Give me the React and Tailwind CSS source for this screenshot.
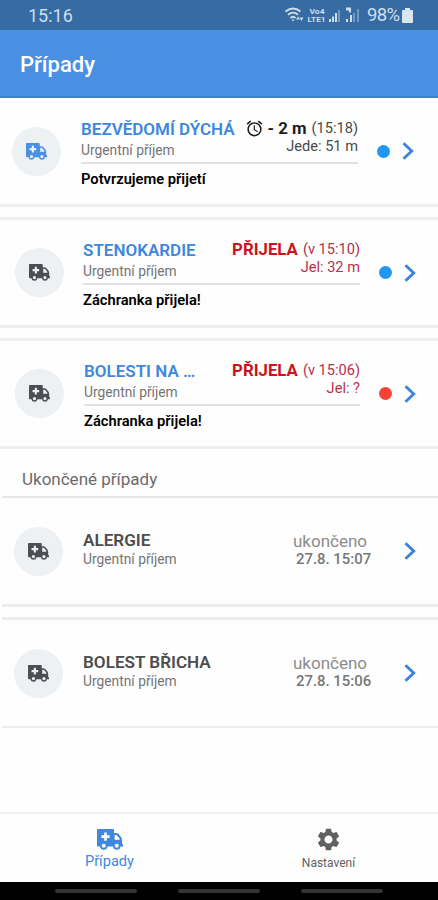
import React from 'react'
import { MdAlarm, MdSettings } from 'react-icons/md'

const activeCases = [
  {
    id: 1,
    title: 'BEZVĚDOMÍ DÝCHÁ',
    place: 'Urgentní příjem',
    message: 'Potvrzujeme přijetí',
    eta: '- 2 m',
    time: '(15:18)',
    drive: 'Jede: 51 m',
    arrived: false,
    dot: 'bg-[#2196f3]',
    card: 'h-[109px] border-b-[3px] pl-3',
    body: 'ml-5 w-[277px]',
  },
  {
    id: 2,
    title: 'STENOKARDIE',
    place: 'Urgentní příjem',
    message: 'Záchranka přijela!',
    time: '(v 15:10)',
    drive: 'Jel: 32 m',
    arrived: true,
    dot: 'bg-[#2196f3]',
    card: 'mt-[10px] h-[111px] border-y-[3px] pl-[15px]',
    body: 'ml-[19px] w-[277px]',
  },
  {
    id: 3,
    title: 'BOLESTI NA …',
    place: 'Urgentní příjem',
    message: 'Záchranka přijela!',
    time: '(v 15:06)',
    drive: 'Jel: ?',
    arrived: true,
    dot: 'bg-[#f44336]',
    card: 'mt-[10px] h-[111px] border-y-[3px] pl-[15px]',
    body: 'ml-5 w-[276px]',
  },
]

const closedCases = [
  { id: 4, title: 'ALERGIE', place: 'Urgentní příjem', date: '27.8. 15:07', card: 'h-[109px] border-b-[3px]' },
  { id: 5, title: 'BOLEST BŘICHA', place: 'Urgentní příjem', date: '27.8. 15:06', card: 'mt-[10px] h-[111px] border-t-[3px] border-b-2' },
]

const Ambulance = ({ className }) => (
  <svg viewBox="0 0 26 21" className={className} fill="currentColor">
    <path
      fillRule="evenodd"
      d="M1 0H16Q17 0 17 1V4H19Q20.5 4 21.6 5.1L24 8Q25 9.3 25 11V15H26V17.5H23.5A3.8 3.8 0 0 1 16 17.5H10.5A3.8 3.8 0 0 1 3 17.5H1Q0 17.5 0 16.5V1Q0 0 1 0ZM7.2 3.5V6.3H4.4V8.9H7.2V11.7H9.8V8.9H12.6V6.3H9.8V3.5ZM17.6 6V10.7H22.8Q22.8 9.8 22.2 9L20.5 6.9Q19.7 6 18.6 6ZM6.75 14.8A2 2 0 1 0 6.75 18.8A2 2 0 1 0 6.75 14.8ZM19.75 14.8A2 2 0 1 0 19.75 18.8A2 2 0 1 0 19.75 14.8Z"
    />
  </svg>
)

const Chevron = () => (
  <svg viewBox="0 0 12 18" className="h-[18px] w-3 shrink-0" fill="none" stroke="#3d85d8" strokeWidth="2.9">
    <path d="M1.5 1.2L9.7 9L1.5 16.8" />
  </svg>
)

const Avatar = ({ color }) => (
  <div className={`flex h-[49px] w-[49px] shrink-0 items-center justify-center rounded-full bg-[#edf1f4] ${color}`}>
    <Ambulance className="h-[17px] w-[21px]" />
  </div>
)

const ActiveCard = ({ item }) => (
  <div className={`flex items-center border-[#efefef] ${item.card}`}>
    <Avatar color={item.arrived ? 'text-[#4b4f54]' : 'text-[#4a90e2]'} />
    <div className={`shrink-0 pt-[5px] ${item.body}`}>
      <div className="flex h-[45px] justify-between border-b-2 border-[#e2e2e2] whitespace-nowrap">
        <div>
          <div className="text-[17px] font-semibold leading-5 text-[#3f87dc]">{item.title}</div>
          <div className="mt-[1px] text-[13.8px] leading-5 text-[#757575]">{item.place}</div>
        </div>
        <div className={`text-right ${item.arrived ? 'text-[#b9304a]' : 'text-[#4a4a4a]'}`}>
          <div className="flex h-5 items-center justify-end text-[14.6px]">
            {item.arrived ? (
              <span className="mr-[5px] text-[16.8px] font-bold text-[#cb1220]">PŘIJELA</span>
            ) : (
              <>
                <MdAlarm size={19} className="mr-[3px] text-[#222]" />
                <span className="mr-[5px] text-[16.8px] font-bold text-[#1c1c1c]">{item.eta}</span>
              </>
            )}
            <span>{item.time}</span>
          </div>
          <div className="-mt-[1px] text-[14.6px] leading-4">{item.drive}</div>
        </div>
      </div>
      <div className="mt-[5px] text-[14.7px] font-semibold leading-5 text-black">{item.message}</div>
    </div>
    <div className={`ml-[19px] mr-3 h-[13px] w-[13px] shrink-0 rounded-full ${item.dot}`} />
    <Chevron />
  </div>
)

const ClosedCard = ({ item }) => (
  <div className={`ml-[2px] flex items-center border-[#ececec] pl-3 ${item.card}`}>
    <Avatar color="text-[#4b4f54]" />
    <div className="-mt-[4px] ml-5 w-[210px]">
      <div className="text-[17.1px] font-semibold leading-5 text-[#4d4d4d]">{item.title}</div>
      <div className="text-[13.8px] leading-[18px] text-[#757575]">{item.place}</div>
    </div>
    <div className="-mt-[5px] w-[79px] whitespace-nowrap">
      <div className="text-[17px] leading-5 text-[#8c8c8c]">ukončeno</div>
      <div className="pl-[3px] text-[14.9px] font-medium leading-4 text-[#777]">{item.date}</div>
    </div>
    <div className="ml-[32px]">
      <Chevron />
    </div>
  </div>
)

const StatusIcons = () => (
  <svg viewBox="0 0 76 18" className="h-[18px] w-[76px]" fill="none" stroke="#cfdeec" strokeWidth="1.8">
    <path d="M0.5 5.5Q8 -0.5 15.5 5.5M3 8.7Q8 4.5 13 8.7M5.5 12Q8 9.5 10.5 12" />
    <path d="M6.5 13.5h3l-1.5 2zM11 13.5l2-3 2 3zM14.5 11.5l2 3.5 2-3.5z" fill="#cfdeec" stroke="none" />
    <g fill="#cfdeec" stroke="none" fontSize="7" fontWeight="700">
      <text x="24.5" y="7.5" textLength="15" lengthAdjust="spacingAndGlyphs">Vo4</text>
      <text x="22.5" y="16" textLength="18" lengthAdjust="spacingAndGlyphs">LTE1</text>
      <path d="M44 13h2v3h-2zM47 10.5h2v5.5h-2zM50 7h2v9h-2z" />
      <path d="M53 4h2v12h-2zM68 7h2v9h-2zM72 3h2v13h-2z" opacity=".4" />
      <path d="M61 1.5h5v5h-2v-2h-3zM61 13h2v3h-2zM65 9h2v7h-2z" />
    </g>
  </svg>
)

const App = () => {
  return (
    <div className="flex h-[900px] w-[438px] flex-col overflow-hidden bg-[#fefefe] font-['Roboto','Noto_Sans',sans-serif]">
      <div className="flex h-[30px] shrink-0 items-center bg-[#366ba3] pl-7 text-[#cfdeec]">
        <span className="w-[257px] text-[18px]">15:16</span>
        <StatusIcons />
        <span className="ml-[6px] w-[34px] pt-[2px] text-[18.5px] tracking-[-0.6px]">98%</span>
        <svg viewBox="0 0 11 15" className="ml-[1px] h-[15px] w-[11px]" fill="#d9e6f2">
          <path d="M3 0h5v2h2q1 0 1 1v11q0 1-1 1H1q-1 0-1-1V3q0-1 1-1h2z" />
        </svg>
      </div>
      <header className="flex h-[68px] shrink-0 items-center border-b-2 border-[#417fd0] bg-[#4a90e2] pt-[2px] pl-5">
        <h1 className="text-[22px] font-medium text-white">Případy</h1>
      </header>

      <main className="flex-1">
        {activeCases.map((item) => (
          <ActiveCard key={item.id} item={item} />
        ))}
        <div className="ml-[2px] flex h-[49px] items-center border-b-2 border-[#e6e6e6] pl-5 pt-[14px] text-[17px] text-[#6b6b6b]">
          Ukončené případy
        </div>
        {closedCases.map((item) => (
          <ClosedCard key={item.id} item={item} />
        ))}
      </main>

      <nav className="flex h-[70px] shrink-0 border-t-2 border-[#f0f0f0]">
        <div className="flex w-1/2 flex-col items-center pt-[15px] text-[#4088dc]">
          <Ambulance className="h-[21px] w-[26px]" />
          <span className="mt-[1px] text-[14.6px] leading-5">Případy</span>
        </div>
        <div className="flex w-1/2 flex-col items-center pt-[12px] text-[#616161]">
          <MdSettings size={27} />
          <span className="text-[12px] leading-5">Nastavení</span>
        </div>
      </nav>
      <div className="flex h-[18px] shrink-0 justify-center gap-[41px] bg-black pt-[7px]">
        <span className="h-1 w-[82px] rounded-full bg-[#343434]" />
        <span className="h-1 w-[82px] rounded-full bg-[#343434]" />
        <span className="h-1 w-[82px] rounded-full bg-[#343434]" />
      </div>
    </div>
  )
}

export default App
